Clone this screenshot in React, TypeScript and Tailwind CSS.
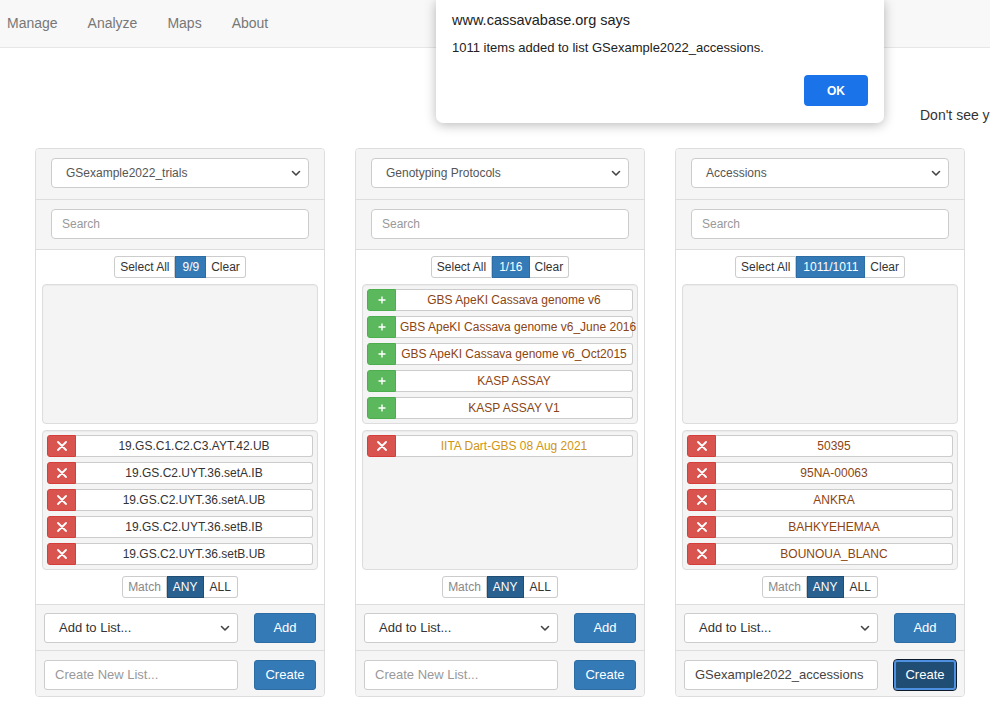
import { ReactNode } from 'react';

// iconos pequeños de las filas
function XIcon() {
  return (
    <svg width="10" height="10" viewBox="0 0 10 10">
      <path d="M1 1 L9 9 M9 1 L1 9" stroke="white" strokeWidth="1.8" strokeLinecap="round" />
    </svg>
  );
}

function PlusIcon() {
  return (
    <svg width="8" height="8" viewBox="0 0 8 8">
      <path d="M4 0.5 V7.5 M0.5 4 H7.5" stroke="white" strokeWidth="1.4" />
    </svg>
  );
}

function Chevron() {
  return (
    <svg width="10" height="7" viewBox="0 0 10 7">
      <path d="M1.5 1.5 L5 5 L8.5 1.5" fill="none" stroke="#444" strokeWidth="1.6" strokeLinecap="round" strokeLinejoin="round" />
    </svg>
  );
}

type Item = { label: string; tone: string };

function Row({ item, kind }: { item: Item; kind: 'add' | 'remove' }) {
  return (
    <div className="flex h-[22px]">
      <div
        className={`w-[29px] shrink-0 flex items-center justify-center rounded-l-[3px] border ${
          kind === 'add' ? 'bg-[#5cb85c] border-[#4cae4c]' : 'bg-[#d9534f] border-[#d43f3a]'
        }`}
      >
        {kind === 'add' ? <PlusIcon /> : <XIcon />}
      </div>
      <div
        className={`flex-1 min-w-0 border border-l-0 border-[#ccc] rounded-r-[3px] bg-white text-center px-[4px] text-[12px] leading-[20px] whitespace-nowrap ${item.tone}`}
      >
        {item.label}
      </div>
    </div>
  );
}

function ListBox({ items, kind }: { items: Item[]; kind: 'add' | 'remove' }) {
  return (
    <div className="h-[140px] bg-[#f4f4f4] border border-[#ddd] rounded-[4px] p-[4px] flex flex-col gap-[5px] shadow-[inset_0_1px_1px_rgba(0,0,0,0.04)]">
      {items.map((it) => (
        <Row key={it.label} item={it} kind={kind} />
      ))}
    </div>
  );
}

function Group({ children }: { children: ReactNode }) {
  return (
    <div className="flex justify-center">
      <div className="flex h-[22px] text-[12px]">{children}</div>
    </div>
  );
}

function Panel({
  title,
  counter,
  available,
  selected,
  listName,
  focused,
}: {
  title: string;
  counter: string;
  available: Item[];
  selected: Item[];
  listName?: string;
  focused?: boolean;
}) {
  return (
    <div className="w-[290px] h-[549px] border border-[#ddd] rounded-[4px] flex flex-col overflow-hidden bg-white">
      {/* selector de tipo */}
      <div className="bg-[#f5f5f5] border-b border-[#ddd] px-[15px] pt-[9px] pb-[11px]">
        <div className="h-[30px] bg-white border border-[#ccc] rounded-[4px] flex items-center justify-between pl-[14px] pr-[7px] text-[12px] text-[#555]">
          <span>{title}</span>
          <Chevron />
        </div>
      </div>
      {/* busqueda */}
      <div className="bg-[#f5f5f5] border-b border-[#ddd] px-[15px] pt-[9px] pb-[10px]">
        <input
          readOnly
          placeholder="Search"
          className="w-full h-[30px] bg-white border border-[#ccc] rounded-[4px] px-[10px] text-[12px] text-[#555] placeholder:text-[#999] outline-none"
        />
      </div>
      {/* cuerpo */}
      <div className="flex flex-col gap-[6px] p-[6px]">
        <Group>
          <span className="px-[5px] flex items-center bg-white border border-[#ccc] rounded-l-[3px] text-[#333]">Select All</span>
          <span className="px-[6px] flex items-center bg-[#337ab7] border border-[#2e6da4] text-white">{counter}</span>
          <span className="px-[5px] flex items-center bg-white border border-l-0 border-[#ccc] rounded-r-[3px] text-[#333]">Clear</span>
        </Group>
        <ListBox items={available} kind="add" />
        <ListBox items={selected} kind="remove" />
        <Group>
          <span className="px-[5px] flex items-center bg-white border border-[#ccc] rounded-l-[3px] text-[#888]">Match</span>
          <span className="px-[5px] flex items-center bg-[#286090] border border-[#204d74] text-white">ANY</span>
          <span className="px-[6px] flex items-center bg-white border border-l-0 border-[#ccc] rounded-r-[3px] text-[#333]">ALL</span>
        </Group>
      </div>
      {/* listas */}
      <div className="bg-[#f5f5f5] border-t border-[#ddd] flex items-center justify-between px-[8px] pt-[8px] pb-[7px]">
        <div className="w-[194px] h-[30px] bg-white border border-[#ccc] rounded-[3px] flex items-center justify-between pl-[14px] pr-[7px] text-[13px] text-[#333]">
          <span>Add to List...</span>
          <Chevron />
        </div>
        <button className="w-[62px] h-[30px] bg-[#337ab7] border border-[#2e6da4] rounded-[3px] text-white text-[13px] font-medium">Add</button>
      </div>
      <div className="bg-[#f5f5f5] border-t border-[#ddd] flex items-center justify-between px-[8px] pt-[9px] pb-[6px]">
        <div className={`w-[194px] h-[30px] bg-white border border-[#ccc] rounded-[3px] flex items-center px-[10px] text-[13px] ${listName ? 'text-[#444]' : 'text-[#999]'}`}>
          {listName ?? 'Create New List...'}
        </div>
        {focused ? (
          <button className="w-[62px] h-[30px] bg-[#204d74] border-2 border-[#4d8fe0] outline outline-1 outline-[#0d1a2a] rounded-[3px] text-white text-[13px] font-medium">Create</button>
        ) : (
          <button className="w-[62px] h-[30px] bg-[#337ab7] border border-[#2e6da4] rounded-[3px] text-white text-[13px] font-medium">Create</button>
        )}
      </div>
    </div>
  );
}

const BLACK = 'text-[#333]';
const BROWN = 'text-[#8b4513]';
const GOLD = 'text-[#cf9410]';

export default function App() {
  return (
    <div className="relative w-[990px] h-[702px] overflow-hidden bg-white font-['Liberation_Sans',Arial,sans-serif]">
      {/* barra de navegacion */}
      <nav className="h-[48px] bg-[#f8f8f8] border-b border-[#e7e7e7] flex items-center gap-[30px] pl-[7px] text-[14px] text-[#777]">
        <span>Manage</span>
        <span>Analyze</span>
        <span>Maps</span>
        <span>About</span>
      </nav>

      {/* el texto sigue fuera de la ventana, como en la captura */}
      <div className="mt-[57px] pl-[920px] whitespace-nowrap text-[14px] leading-[20px] text-[#333]">Don't see your list? Refresh</div>

      <div className="mt-[23px] pl-[35px] flex gap-[30px]">
        <Panel
          title="GSexample2022_trials"
          counter="9/9"
          available={[]}
          selected={[
            { label: '19.GS.C1.C2.C3.AYT.42.UB', tone: BLACK },
            { label: '19.GS.C2.UYT.36.setA.IB', tone: BLACK },
            { label: '19.GS.C2.UYT.36.setA.UB', tone: BLACK },
            { label: '19.GS.C2.UYT.36.setB.IB', tone: BLACK },
            { label: '19.GS.C2.UYT.36.setB.UB', tone: BLACK },
          ]}
        />
        <Panel
          title="Genotyping Protocols"
          counter="1/16"
          available={[
            { label: 'GBS ApeKI Cassava genome v6', tone: BROWN },
            { label: 'GBS ApeKI Cassava genome v6_June 2016', tone: BROWN },
            { label: 'GBS ApeKI Cassava genome v6_Oct2015', tone: BROWN },
            { label: 'KASP ASSAY', tone: BROWN },
            { label: 'KASP ASSAY V1', tone: BROWN },
          ]}
          selected={[{ label: 'IITA Dart-GBS 08 Aug 2021', tone: GOLD }]}
        />
        <Panel
          title="Accessions"
          counter="1011/1011"
          available={[]}
          selected={[
            { label: '50395', tone: BROWN },
            { label: '95NA-00063', tone: BROWN },
            { label: 'ANKRA', tone: BROWN },
            { label: 'BAHKYEHEMAA', tone: BROWN },
            { label: 'BOUNOUA_BLANC', tone: BROWN },
          ]}
          listName="GSexample2022_accessions"
          focused
        />
      </div>

      {/* alerta del navegador */}
      <div className="absolute left-[436px] top-0 w-[448px] h-[123px] bg-white rounded-b-[7px] shadow-[0_2px_12px_rgba(0,0,0,0.28)] px-[16px] pt-[11px]">
        <div className="text-[14.5px] leading-[18px] text-[#222]">www.cassavabase.org says</div>
        <div className="mt-[11px] text-[13px] leading-[16px] text-[#222]">1011 items added to list GSexample2022_accessions.</div>
        <div className="mt-[19px] flex justify-end">
          <button className="w-[64px] h-[31px] bg-[#1a73e8] rounded-[4px] text-white text-[12px] font-bold">OK</button>
        </div>
      </div>
    </div>
  );
}
